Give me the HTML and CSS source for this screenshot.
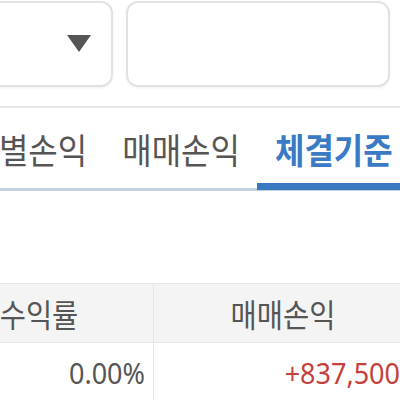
FILE: index.html
```html
<!DOCTYPE html>
<html lang="ko">
<head>
    <meta charset="UTF-8">
    <meta name="viewport" content="width=device-width, initial-scale=1.0">
    <title>체결기준</title>
    <link rel="stylesheet" href="styles.css">
</head>
<body>
<div class="screen">
    <!-- 검색 조건 -->
    <div class="filters">
        <div class="select">
            <span class="arrow"></span>
        </div>
        <div class="input"></div>
    </div>

    <!-- 탭 -->
    <div class="tabs">
        <div class="tab"><span class="txt">종목별손익</span></div>
        <div class="tab"><span class="txt">매매손익</span></div>
        <div class="tab active"><span class="txt">체결기준</span></div>
    </div>

    <!-- 표 -->
    <div class="table">
        <div class="row head">
            <div class="cell c1"><span class="txt">수익률</span></div>
            <div class="cell c2"><span class="txt">매매손익</span></div>
        </div>
        <div class="row">
            <div class="cell c1 num"><span class="txt">0.00%</span></div>
            <div class="cell c2 num plus"><span class="txt">+837,500</span></div>
        </div>
    </div>
</div>
</body>
</html>
```

FILE: styles.css
```css
body {
    margin: 0;
    padding: 0;
    background-color: #fff;
    font-family: "Noto Sans CJK KR", "Noto Sans", sans-serif;
    color: #555;
}
.screen {
    width: 400px;
    height: 400px;
    overflow: hidden;
}
.txt {
    display: inline-block;
    transform: scaleY(1.1);
}
.filters {
    display: flex;
    gap: 13px;
    margin-left: -62px;
    padding-top: 1px;
    padding-bottom: 19px;
    border-bottom: 2px solid #e6e6e6;
}
.select,
.input {
    flex-shrink: 0;
    height: 86px;
    box-sizing: border-box;
    border: 2px solid #e2e2e2;
    border-radius: 12px;
    box-shadow: 0 1px 3px rgba(0, 0, 0, 0.06);
}
.select {
    width: 175px;
    display: flex;
    align-items: center;
    justify-content: flex-end;
    padding-right: 20px;
}
.input {
    width: 264px;
}
.arrow {
    width: 0;
    height: 0;
    border-left: 12.5px solid transparent;
    border-right: 12.5px solid transparent;
    border-top: 17px solid #555;
    margin-bottom: 2px;
}
.tabs {
    display: flex;
    margin-left: -77.5px;
    height: 80px;
    border-bottom: 3px solid #c3d0de;
}
.tab {
    flex-shrink: 0;
    display: flex;
    align-items: center;
    padding: 2px 17.5px 0;
    font-size: 32px;
    color: #555;
    white-space: nowrap;
}
.tab.active {
    color: #3b7bc5;
    font-weight: bold;
    border-bottom: 7px solid #3a78c2;
    margin-bottom: -2px;
    padding-top: 7px;
}
.table {
    margin-top: 92px;
    margin-left: -75px;
}
.row {
    display: flex;
    height: 58px;
}
.row.head {
    background-color: #f4f4f4;
    border-top: 1px solid #e6e6e6;
    border-bottom: 1px solid #e6e6e6;
}
.cell {
    flex-shrink: 0;
    display: flex;
    align-items: center;
    justify-content: center;
    font-size: 28.5px;
    box-sizing: border-box;
}
.c1 {
    width: 229px;
    border-right: 1px solid #e6e6e6;
}
.c2 {
    width: 258px;
}
.num {
    justify-content: flex-end;
    padding-right: 8px;
    font-family: "Noto Sans", sans-serif;
    font-size: 27px;
}
.c2.num {
    padding-right: 12px;
}
.plus {
    color: #c4403b;
}
```
